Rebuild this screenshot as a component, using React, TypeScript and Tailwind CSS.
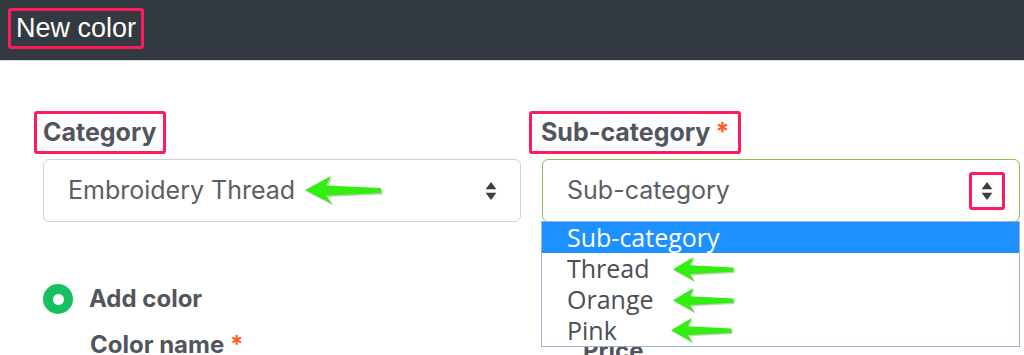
import React from 'react';

function Arrow({ className }: { className?: string }) {
  // green callout arrow pointing left
  const d = 'M0 14 L26 0 L21 9.5 L76 12 L76 17 L21 19.5 L27 28 Z';
  return (
    <svg viewBox="0 0 78 30" preserveAspectRatio="none" className={className} aria-hidden>
      <path d={d} fill="#1a6a0a" opacity="0.3" transform="translate(1.5 1.5)" />
      <path d={d} fill="#33ee11" />
    </svg>
  );
}

function UpDown() {
  return (
    <svg viewBox="0 0 14 22" className="h-[20px] w-[14px]" aria-hidden>
      <path d="M7 1 L13 9 H1 Z" fill="#3a3f45" />
      <path d="M7 21 L13 13 H1 Z" fill="#3a3f45" />
    </svg>
  );
}

const OPTIONS = ['Thread', 'Orange', 'Pink'];

export default function App() {
  return (
    <div className="h-[355px] w-[1024px] overflow-hidden bg-white font-['Inter',sans-serif]">
      {/* Header */}
      <header className="h-[61px] border-b border-[#d6d8db] bg-[#343a41] pl-[8px] pt-[8px]">
        <div className="inline-flex h-[41px] items-center rounded-[3px] border-[3px] border-[#ff1a5c] px-[5px] font-['Liberation_Sans',sans-serif] text-[27px] text-white">
          New color
        </div>
      </header>

      {/* Body */}
      <div className="flex gap-[21px] pl-[43px] pt-[50px]">
        {/* Category */}
        <div className="w-[478px]">
          <div className="-ml-[9px] inline-flex h-[43px] items-center rounded-[3px] border-[3px] border-[#ff1a5c] px-[6px] text-[25px] font-bold leading-none text-[#51565d]">
            Category
          </div>
          <div className="relative mt-[5px] flex h-[63px] items-center justify-between rounded-[6px] border border-[#ced2d7] pl-[24px] pr-[22px] text-[25px] text-[#5a5f66]">
            <span>Embroidery Thread</span>
            <UpDown />
            <Arrow className="absolute left-[261px] top-[16px] h-[30px] w-[78px]" />
          </div>

          <div className="mt-[62px] flex items-center gap-[16px]">
            <span className="flex h-[30px] w-[30px] items-center justify-center rounded-full bg-[#16c15f]">
              <span className="h-[11px] w-[11px] rounded-full bg-white" />
            </span>
            <span className="text-[24px] font-bold leading-[30px] text-[#51565d]">Add color</span>
          </div>
          <div className="ml-[47px] mt-[16px] text-[24px] font-bold leading-[30px] text-[#51565d]">
            Color name <span className="text-[#ff5a1f]">*</span>
          </div>
        </div>

        {/* Sub-category */}
        <div className="relative w-[478px]">
          <div className="-ml-[13px] inline-flex h-[43px] items-center rounded-[3px] border-[3px] border-[#ff1a5c] px-[9px] text-[25px] font-bold leading-none text-[#51565d]">
            Sub-category <span className="ml-[5px] text-[#ff5a1f]">*</span>
          </div>
          <div className="mt-[5px] flex h-[63px] items-center justify-between rounded-[6px] border border-[#8cc152] pl-[24px] pr-[14px] text-[25px] text-[#5a5f66]">
            <span>Sub-category</span>
            <span className="flex h-[38px] w-[36px] items-center justify-center rounded-[3px] border-[3px] border-[#ff1a5c]">
              <UpDown />
            </span>
          </div>

          <div className="ml-[41px] mt-[114px] text-[24px] font-bold leading-[30px] text-[#51565d]">Price</div>

          {/* open option list */}
          <div className="absolute left-[-1px] top-[110px] w-[479px] border border-[#9fb3d3] bg-white font-['Open_Sans',sans-serif] text-[25px] leading-[31px] text-[#4a4f55]">
            <div className="bg-[#1e90ff] pl-[25px] text-white">Sub-category</div>
            {OPTIONS.map((o) => (
              <div key={o} className="pl-[25px]">
                {o}
              </div>
            ))}
            <Arrow className="absolute left-[131px] top-[35px] h-[26px] w-[62px]" />
            <Arrow className="absolute left-[131px] top-[66px] h-[26px] w-[62px]" />
            <Arrow className="absolute left-[129px] top-[96px] h-[26px] w-[62px]" />
          </div>
        </div>
      </div>
    </div>
  );
}
